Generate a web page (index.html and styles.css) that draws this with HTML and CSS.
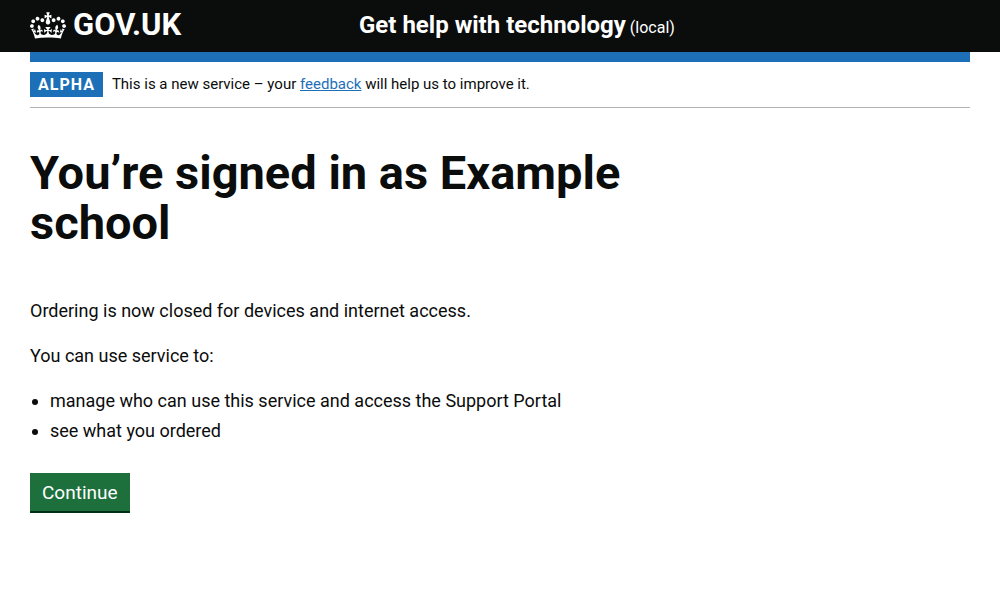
FILE: index.html
```html
<!DOCTYPE html>
<html lang="en">
<head>
<meta charset="utf-8">
<meta name="viewport" content="width=device-width, initial-scale=1">
<title>You’re signed in as Example school</title>
<link rel="stylesheet" href="styles.css">
</head>
<body>
<header class="header">
  <div class="header-container container">
    <div class="header-logo">
      <a class="logo-link" href="#">
        <svg class="crown" viewBox="0 0 132 97" width="36" height="27" aria-hidden="true" focusable="false">
          <path fill="currentColor" fill-rule="evenodd" d="M25 30.2c3.5 1.5 7.7-.2 9.1-3.7 1.5-3.6-.2-7.8-3.9-9.2-3.6-1.4-7.6.3-9.1 3.9-1.4 3.5.3 7.5 3.9 9zM9 39.5c3.6 1.5 7.8-.2 9.2-3.7 1.5-3.6-.2-7.8-3.9-9.1-3.6-1.5-7.6.2-9.1 3.8-1.4 3.5.3 7.5 3.8 9zM4.4 57.2c3.5 1.5 7.7-.2 9.1-3.8 1.5-3.6-.2-7.7-3.9-9.1-3.5-1.5-7.6.3-9.1 3.8-1.4 3.5.3 7.6 3.9 9.1zm38.3-21.4c3.5 1.5 7.7-.2 9.1-3.8 1.5-3.6-.2-7.7-3.9-9.1-3.6-1.5-7.6.3-9.1 3.8-1.3 3.6.4 7.7 3.9 9.1zm64.4-5.6c-3.6 1.5-7.8-.2-9.1-3.7-1.5-3.6.2-7.8 3.8-9.2 3.6-1.4 7.7.3 9.2 3.9 1.3 3.5-.4 7.5-3.9 9zm15.9 9.3c-3.6 1.5-7.7-.2-9.1-3.7-1.5-3.6.2-7.8 3.7-9.1 3.6-1.5 7.7.2 9.2 3.8 1.5 3.5-.3 7.5-3.8 9zm4.7 17.7c-3.6 1.5-7.8-.2-9.2-3.8-1.5-3.6.2-7.7 3.9-9.1 3.6-1.5 7.7.3 9.2 3.8 1.3 3.5-.4 7.6-3.9 9.1zM89.3 35.8c-3.6 1.5-7.8-.2-9.2-3.8-1.4-3.6.2-7.7 3.9-9.1 3.6-1.5 7.7.3 9.2 3.8 1.4 3.6-.3 7.7-3.9 9.1zM69.7 17.7l8.9 4.7V9.3l-8.9 2.8c-.2-.3-.5-.6-.9-.9L72.4 0H59.6l3.5 11.2c-.3.3-.6.5-.9.9l-8.8-2.8v13.1l8.8-4.7c.3.3.6.7.9.9l-5 15.4v.1c-.2.8-.4 1.6-.4 2.4 0 4.1 3.1 7.5 7 8.1h.2c.3 0 .7.1 1 .1.4 0 .7 0 1-.1h.2c4-.6 7.1-4.1 7.1-8.1 0-.8-.1-1.7-.4-2.4V34l-5.1-15.4c.4-.2.7-.6 1-.9zM66 92.8c16.9 0 32.8 1.1 47.1 3.2 4-16.9 8.9-26.7 14-33.5l-9.6-3.4c1 4.9 1.1 7.2 0 10.2-1.5-1.4-3-4.3-4.2-8.7L108.6 76c2.8-2 5-3.2 7.5-3.3-4.4 9.4-10 11.9-13.6 11.2-4.3-.8-6.3-4.6-5.6-7.9 1-4.7 5.7-5.9 8-.5 4.3-8.7-3-11.4-7.6-8.8 7.1-7.2 7.9-13.5 2.1-21.1-8 6.1-8.1 12.3-4.5 20.8-4.7-5.4-12.1-2.5-9.5 6.2 3.4-5.2 7.9-2 7.2 3.1-.6 4.3-6.4 7.8-13.5 7.2-10.3-.9-10.9-8-11.2-13.8 2.5-.5 7.1 1.8 11 7.3L80.2 60c-4.1 4.4-8 5.3-12.3 5.4 1.4-4.4 8-11.6 8-11.6H55.5s6.4 7.2 7.9 11.6c-4.2-.1-8-1-12.3-5.4l1.4 16.4c3.9-5.5 8.5-7.7 10.9-7.3-.3 5.8-.9 12.8-11.1 13.8-7.2.6-12.9-2.9-13.5-7.2-.7-5 3.8-8.3 7.1-3.1 2.7-8.7-4.6-11.6-9.4-6.2 3.7-8.5 3.6-14.7-4.6-20.8-5.8 7.6-5 13.9 2.2 21.1-4.7-2.6-11.9.1-7.7 8.8 2.3-5.5 7.1-4.2 8.1.5.7 3.3-1.3 7.1-5.7 7.9-3.5.7-9-1.8-13.5-11.2 2.5.1 4.7 1.3 7.5 3.3l-4.7-15.4c-1.2 4.4-2.7 7.2-4.3 8.7-1.1-3-.9-5.3 0-10.2l-9.5 3.4c5 6.9 9.9 16.7 14 33.5 14.8-2.1 30.8-3.2 47.7-3.2z"/>
        </svg>
        <span>GOV.UK</span>
      </a>
    </div>
    <div class="header-content">
      <a class="service-name" href="#">Get help with technology</a>
      <span class="environment">(local)</span>
    </div>
  </div>
</header>
<div class="container">
  <div class="header-bar"></div>
  <div class="phase-banner">
    <strong class="tag">ALPHA</strong>
    <span class="phase-text">This is a new service – your <a class="link" href="#">feedback</a> will help us to improve it.</span>
  </div>
  <main class="main">
    <h1 class="heading">You’re signed in as Example school</h1>
    <p class="body-text">Ordering is now closed for devices and internet access.</p>
    <p class="body-text">You can use service to:</p>
    <ul class="list">
      <li>manage who can use this service and access the Support Portal</li>
      <li>see what you ordered</li>
    </ul>
    <button class="button" type="button">Continue</button>
  </main>
</div>
</body>
</html>
```
FILE: styles.css
```css
* {
  box-sizing: border-box;
}

body {
  margin: 0;
  background: #fff;
  color: #0b0c0c;
  font-family: Roboto, "Liberation Sans", sans-serif;
  font-size: 18px;
  line-height: 25px;
}

.container {
  max-width: 960px;
  margin: 0 30px;
}

.header {
  background: #0b0c0c;
  color: #fff;
}

.header-container {
  display: flex;
  height: 52px;
}

.header-logo {
  width: 35%;
  padding-top: 10px;
}

.logo-link {
  display: inline-flex;
  align-items: center;
  gap: 7px;
  color: inherit;
  font-size: 31px;
  font-weight: 700;
  line-height: 30px;
  text-decoration: none;
}

.header-content {
  display: flex;
  align-items: baseline;
  gap: 4px;
  padding-top: 10px;
  line-height: 30px;
}

.service-name {
  color: inherit;
  font-size: 24px;
  font-weight: 700;
  text-decoration: none;
}

.environment {
  font-size: 16px;
}

.header-bar {
  height: 10px;
  background: #1d70b8;
}

.phase-banner {
  display: flex;
  align-items: center;
  gap: 9px;
  padding: 10px 0;
  border-bottom: 1px solid #b1b4b6;
}

.phase-text {
  font-size: 15px;
}

.tag {
  padding: 0 8px;
  background: #1d70b8;
  color: #fff;
  font-size: 16px;
  font-weight: 700;
  letter-spacing: 1px;
}

.link {
  color: #1d70b8;
  text-decoration: underline;
}

.main {
  max-width: 627px;
  padding: 40px 0;
}

.heading {
  margin: 0 0 50px;
  font-size: 47px;
  font-weight: 700;
  line-height: 50px;
}

.body-text {
  margin: 0 0 20px;
}

.list {
  margin: 0 0 30px;
  padding-left: 20px;
}

.list li {
  margin-bottom: 5px;
}

.button {
  padding: 7px 12px 6px;
  border: 0;
  background: #1d703c;
  box-shadow: 0 2px 0 #002d18;
  color: #fff;
  font: inherit;
  font-size: 19px;
}
```
